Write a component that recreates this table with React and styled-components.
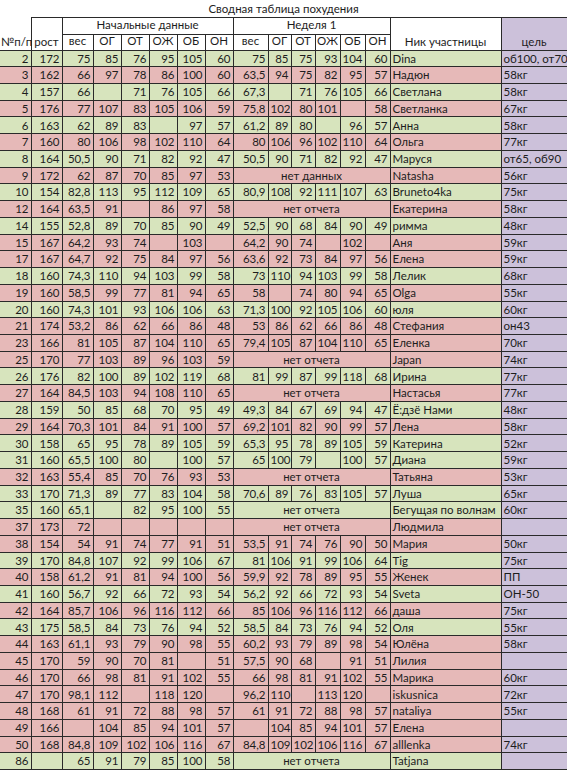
import React from 'react';
import styled, { createGlobalStyle } from 'styled-components';

const GlobalStyle = createGlobalStyle`
  html, body {
    margin: 0;
    padding: 0;
    background: #fff;
  }
  body {
    font-family: 'Lato', 'Liberation Sans', sans-serif;
    color: #1d1d1d;
  }
`;

const tones = { g: '#d7e4bd', p: '#e6b9b8' };
const GOAL = '#ccc1da';
const LINE = '#2a2a2a';

const widths = [31, 31, 31, 28, 28, 28, 28, 28, 35, 23, 24, 25, 25, 25, 111, 66];
const measures = ['вес', 'ОГ', 'ОТ', 'ОЖ', 'ОБ', 'ОН'];

// [№, рост, начальные данные, неделя 1 (или текст), ник, цель, цвет]
const rows = [
  [2, 172, [75, 85, 76, 95, 105, 60], [75, 85, 75, 93, 104, 60], 'Dina', 'об100, от70', 'g'],
  [3, 162, [66, 97, 78, 86, 100, 60], ['63,5', 94, 75, 82, 95, 57], 'Надюн', '58кг', 'p'],
  [4, 157, [66, '', 71, 76, 105, 66], ['67,3', '', 71, 76, 105, 66], 'Светлана', '58кг', 'g'],
  [5, 176, [77, 107, 83, 105, 106, 59], ['75,8', 102, 80, 101, '', 58], 'Светланка', '67кг', 'p'],
  [6, 163, [62, 89, 83, '', 97, 57], ['61,2', 89, 80, '', 96, 57], 'Анна', '58кг', 'g'],
  [7, 160, [80, 106, 98, 102, 110, 64], [80, 106, 96, 102, 110, 64], 'Ольга', '77кг', 'p'],
  [8, 164, ['50,5', 90, 71, 82, 92, 47], ['50,5', 90, 71, 82, 92, 47], 'Маруся', 'от65, об90', 'g'],
  [9, 172, [62, 87, 70, 85, 97, 53], 'нет данных', 'Natasha', '56кг', 'p'],
  [10, 154, ['82,8', 113, 95, 112, 109, 65], ['80,9', 108, 92, 111, 107, 63], 'Bruneto4ka', '75кг', 'g'],
  [12, 164, ['63,5', 91, '', 86, 97, 58], 'нет отчета', 'Екатерина', '58кг', 'p'],
  [14, 155, ['52,8', 89, 70, 85, 90, 49], ['52,5', 90, 68, 84, 90, 49], 'римма', '48кг', 'g'],
  [15, 167, ['64,2', 93, 74, '', 103, ''], ['64,2', 90, 74, '', 102, ''], 'Аня', '59кг', 'p'],
  [17, 167, ['64,7', 92, 75, 84, 97, 56], ['63,6', 92, 73, 84, 97, 56], 'Елена', '59кг', 'p'],
  [18, 160, ['74,3', 110, 94, 103, 99, 58], [73, 110, 94, 103, 99, 58], 'Лелик', '68кг', 'g'],
  [19, 160, ['58,5', 99, 77, 81, 94, 65], [58, '', 74, 80, 94, 65], 'Olga', '55кг', 'p'],
  [20, 160, ['74,3', 101, 93, 106, 106, 63], ['71,3', 100, 92, 105, 106, 60], 'юля', '60кг', 'g'],
  [21, 174, ['53,2', 86, 62, 66, 86, 48], [53, 86, 62, 66, 86, 48], 'Стефания', 'он43', 'p'],
  [23, 166, [81, 105, 87, 104, 110, 65], ['79,4', 105, 87, 104, 110, 65], 'Еленка', '70кг', 'p'],
  [25, 170, [77, 103, 89, 96, 103, 59], 'нет отчета', 'Japan', '74кг', 'p'],
  [26, 176, [82, 100, 89, 102, 119, 68], [81, 99, 87, 99, 118, 68], 'Ирина', '77кг', 'g'],
  [27, 164, ['84,5', 103, 94, 108, 110, 65], 'нет отчета', 'Настасья', '77кг', 'p'],
  [28, 159, [50, 85, 68, 70, 95, 49], ['49,3', 84, 67, 69, 94, 47], 'Ё:дзё Нами', '48кг', 'g'],
  [29, 164, ['70,3', 101, 84, 91, 100, 57], ['69,2', 101, 82, 90, 99, 57], 'Лена', '58кг', 'p'],
  [30, 158, [65, 95, 78, 89, 105, 59], ['65,3', 95, 78, 89, 105, 59], 'Катерина', '52кг', 'g'],
  [31, 160, ['65,5', 100, 80, '', 100, 57], [65, 100, 79, '', 100, 57], 'Диана', '59кг', 'g'],
  [32, 163, ['55,4', 85, 70, 76, 93, 53], 'нет отчета', 'Татьяна', '53кг', 'p'],
  [33, 170, ['71,3', 89, 77, 83, 104, 58], ['70,6', 89, 76, 83, 105, 57], 'Луша', '65кг', 'g'],
  [35, 160, ['65,1', '', 82, 95, 100, 55], 'нет отчета', 'Бегущая по волнам', '60кг', 'g'],
  [37, 173, [72, '', '', '', '', ''], 'нет отчета', 'Людмила', '', 'p'],
  [38, 154, [54, 91, 74, 77, 91, 51], ['53,5', 91, 74, 76, 90, 50], 'Мария', '50кг', 'p'],
  [39, 170, ['84,8', 107, 92, 99, 106, 67], [81, 106, 91, 99, 106, 64], 'Tig', '75кг', 'g'],
  [40, 158, ['61,2', 91, 81, 94, 100, 56], ['59,9', 92, 78, 89, 95, 55], 'Женек', 'ПП', 'p'],
  [41, 160, ['56,7', 92, 66, 72, 93, 54], ['56,2', 92, 66, 72, 93, 54], 'Sveta', 'ОН-50', 'g'],
  [42, 164, ['85,7', 106, 96, 116, 112, 66], [85, 106, 96, 116, 112, 66], 'даша', '75кг', 'p'],
  [43, 175, ['58,5', 84, 73, 76, 94, 52], ['58,5', 84, 73, 76, 94, 52], 'Оля', '55кг', 'g'],
  [44, 163, ['61,1', 93, 79, 90, 98, 55], ['60,2', 93, 79, 89, 98, 54], 'Юлёна', '58кг', 'p'],
  [45, 170, [59, 90, 70, 81, '', 51], ['57,5', 90, 68, '', 91, 51], 'Лилия', '', 'p'],
  [46, 170, [66, 98, 81, 91, 102, 55], [66, 98, 81, 91, 102, 55], 'Марика', '60кг', 'p'],
  [47, 170, ['98,1', 112, '', 118, 120, ''], ['96,2', 110, '', 113, 120, ''], 'iskusnica', '72кг', 'p'],
  [48, 168, [61, 91, 72, 88, 98, 57], [61, 91, 72, 88, 98, 57], 'nataliya', '55кг', 'p'],
  [49, 166, ['', 104, 85, 94, 101, 57], ['', 104, 85, 94, 101, 57], 'Елена', '', 'p'],
  [50, 168, ['84,8', 109, 102, 106, 116, 67], ['84,8', 109, 102, 106, 116, 67], 'alllenka', '74кг', 'p'],
  [86, '', [65, 91, 79, 85, 100, 58], 'нет отчета', 'Tatjana', '', 'g'],
];

const Sheet = styled.table`
  border-collapse: collapse;
  table-layout: fixed;
  width: 567px;
  font-size: 11.5px;
  line-height: 1;
`;

const TitleRow = styled.tr`
  height: 17px;
`;

const Title = styled.td`
  padding: 0;
  text-align: center;
  vertical-align: middle;
  border: none;
  border-bottom: 1px solid ${LINE};
  background: #fff;
`;

const HeadRow = styled.tr`
  height: ${(p) => p.$h}px;
`;

const HeadCell = styled.th`
  padding: 0 1px 2px;
  font-weight: normal;
  text-align: center;
  vertical-align: ${(p) => (p.$bottom ? 'bottom' : 'middle')};
  white-space: nowrap;
  border: 1px solid ${LINE};
  background: ${(p) => p.$bg || '#fff'};
  ${(p) => p.$first && 'border-top-style: hidden; border-left-style: hidden;'}
`;

const Row = styled.tr`
  height: 16.74px;
  background: ${(p) => tones[p.$tone]};
`;

const Cell = styled.td`
  padding: 0 2px;
  text-align: ${(p) => p.$align || 'right'};
  vertical-align: middle;
  white-space: nowrap;
  overflow: hidden;
  border: 1px solid ${LINE};
  ${(p) => p.$first && 'border-left-style: hidden;'}
`;

const GoalCell = styled(Cell)`
  text-align: left;
  background: ${GOAL};
  overflow: visible;
`;

function App() {
  return (
    <>
      <GlobalStyle />
      <Sheet>
        <colgroup>
          {widths.map((w, i) => (
            <col key={i} style={{ width: w }} />
          ))}
        </colgroup>
        <thead>
          <TitleRow>
            <Title colSpan={16}>Сводная таблица похудения</Title>
          </TitleRow>
          <HeadRow $h={17}>
            <HeadCell rowSpan={2} $bottom $first>№п/п</HeadCell>
            <HeadCell rowSpan={2} $bottom>рост</HeadCell>
            <HeadCell colSpan={6}>Начальные данные</HeadCell>
            <HeadCell colSpan={6}>Неделя 1</HeadCell>
            <HeadCell rowSpan={2} $bottom>Ник участницы</HeadCell>
            <HeadCell rowSpan={2} $bottom $bg={GOAL}>цель</HeadCell>
          </HeadRow>
          <HeadRow $h={16}>
            {measures.map((m) => (
              <HeadCell key={'a' + m}>{m}</HeadCell>
            ))}
            {measures.map((m) => (
              <HeadCell key={'b' + m}>{m}</HeadCell>
            ))}
          </HeadRow>
        </thead>
        <tbody>
          {rows.map(([num, height, start, week, nick, goal, tone]) => (
            <Row key={num} $tone={tone}>
              <Cell $first>{num}</Cell>
              <Cell>{height}</Cell>
              {start.map((v, i) => (
                <Cell key={'s' + i}>{v}</Cell>
              ))}
              {typeof week === 'string' ? (
                <Cell colSpan={6} $align="center">{week}</Cell>
              ) : (
                week.map((v, i) => <Cell key={'w' + i}>{v}</Cell>)
              )}
              <Cell $align="left">{nick}</Cell>
              <GoalCell>{goal}</GoalCell>
            </Row>
          ))}
        </tbody>
      </Sheet>
    </>
  );
}

export default App;
